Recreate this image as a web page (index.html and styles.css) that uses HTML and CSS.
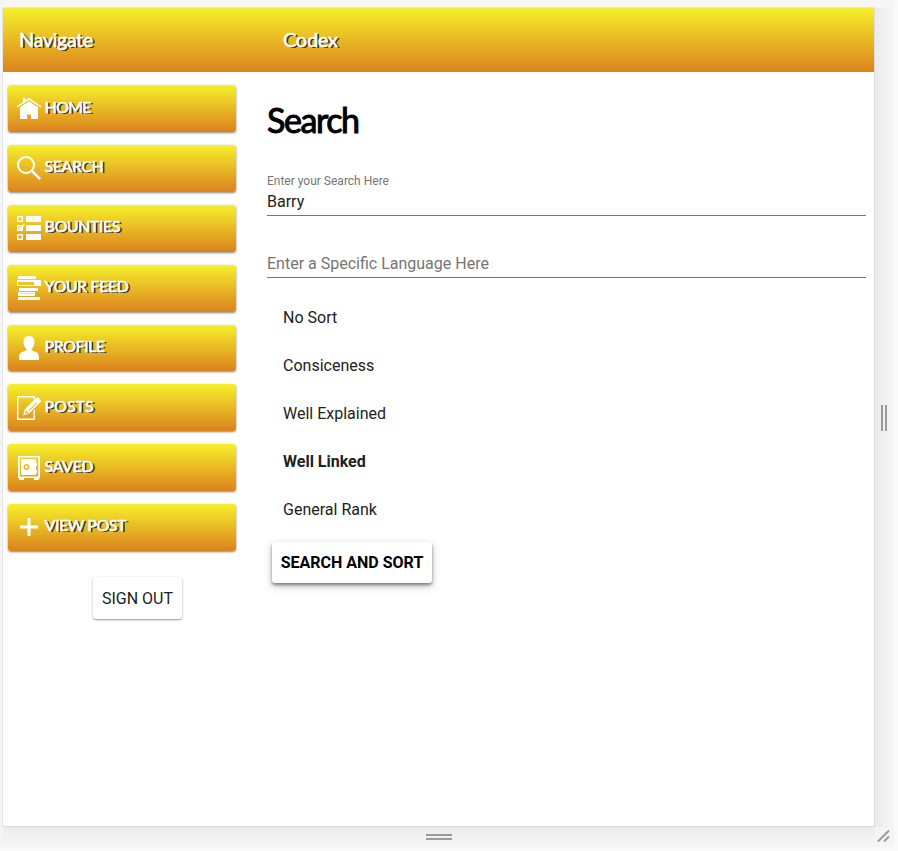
FILE: index.html
```
<!DOCTYPE html>
<html lang="en">
<head>
<meta charset="utf-8">
<title>Codex</title>
<link rel="stylesheet" href="styles.css">
</head>
<body>
<div class="stage">
  <div class="viewport">
    <header class="toolbar"><span class="brand">Navigate</span><span class="title">Codex</span></header>
    <div class="content">
      <nav class="sidebar">
        <a class="nav-button home"><svg viewBox="0 0 24 24"><path d="M0 9 6 5V1h2.500v2.400L12 1l12 8v1.500L12 3 0 10.500z"/><path d="M3 10.200 12 4.500l9 5.700V22h-7v-4.500h-4V22H3z"/></svg><span>HOME</span></a>
        <a class="nav-button search"><svg viewBox="0 0 24 24"><g class="line"><circle cx="9" cy="9" r="8"/><path d="m14.700 14.700 8.400 8.400" stroke-width="2.500"/></g></svg><span>SEARCH</span></a>
        <a class="nav-button bounties"><svg viewBox="0 0 24 24"><path d="M9 0h15v6H9zM9 9h15v6H9zM9 18h15v6H9z"/><path class="line thin" d="M.7.7h4.600v4.600H.7zM5.300 11v3.300H.7V9.700h4M2 11.500l1.500 1.300L7.300 8.500M.7 18.700h4.600v4.600H.7z"/></svg><span>BOUNTIES</span></a>
        <a class="nav-button feed"><svg viewBox="0 0 24 24"><path fill-rule="evenodd" d="M1 0h18v3H1zM0 4h24v6H0zM1 6v3h16V6zM2 12h19v3H2zM1 16h17v4H1zM2 17v.6h15V17zM1 21h22v3H1z"/></svg><span>YOUR FEED</span></a>
        <a class="nav-button profile"><svg viewBox="0 0 24 24"><path d="M12 0c4 0 6 3 5.300 7.200-.4 2.700-1.400 4.600-2.800 5.800v1.200l5 2c2 1 2.500 3.300 2.500 7.800H2c0-4.500.5-6.800 2.500-7.800l5-2V13C8.100 11.800 7.100 9.900 6.700 7.200 6 3 8 0 12 0z"/></svg><span>PROFILE</span></a>
        <a class="nav-button posts"><svg viewBox="0 0 24 24"><path class="line medium" d="M17.200 3V.7H.7v22.600h16.500V14"/><path fill-rule="evenodd" d="M6 19.500 8 13 18.500 2.500C20 1 21 1.500 22.500 3S24.500 5 23 6.500L12.500 17zM9 14.500 8 17.600l3.300-1.100zM11.600 14.300l.7.700 8-8-.7-.7z"/></svg><span>POSTS</span></a>
        <a class="nav-button saved"><svg viewBox="0 0 24 24"><path fill-rule="evenodd" d="M1 0h22v22h-1v2h-5v-2H7v2H2v-2H1zM2.800 1.600v18.800h18.400V1.600z"/><path fill-rule="evenodd" d="M4 3h15v4h1v3h-1v4h1v3h-1v2H4zM9.500 8a3 3 0 1 0 0 6 3 3 0 1 0 0-6zm0 1.500a1.500 1.500 0 1 1 0 3 1.500 1.500 0 1 1 0-3z"/></svg><span>SAVED</span></a>
        <a class="nav-button view"><svg viewBox="0 0 24 24"><path d="M10.500 3h3v7.500H21v3h-7.500V21h-3v-7.500H3v-3h7.500z"/></svg><span>VIEW POST</span></a>
        <button class="sign-out">SIGN OUT</button>
      </nav>
      <main class="main">
        <h1>Search</h1>
        <div class="field filled"><label>Enter your Search Here</label><div class="value">Barry</div></div>
        <div class="field empty"><label>Enter a Specific Language Here</label></div>
        <ul class="options">
          <li>No Sort</li><li>Consiceness</li><li>Well Explained</li><li class="selected">Well Linked</li><li>General Rank</li>
        </ul>
        <button class="submit">SEARCH AND SORT</button>
      </main>
    </div>
  </div>
  <div class="handle side"><i></i><i></i></div>
  <div class="handle bottom"><i></i><i></i></div>
  <div class="corner"><svg viewBox="0 0 14 14"><path d="M1 12.500 12 1.500M7 12.500l5-5"/></svg></div>
</div>
</body>
</html>
```
FILE: styles.css
```
* { box-sizing: border-box; }
body {
  margin: 0;
  height: 851px;
  overflow: hidden;
  background: #fafafa;
  font: 16px Roboto, sans-serif;
  color: #212121;
}
.stage {
  display: grid;
  grid-template: 819px 20px / 872px 19px;
  width: 894px;
  padding: 8px 0 0 3px;
  background: linear-gradient(#f6f6f6, #f4f4f4);
}
.viewport {
  background: #fff;
  border: solid #ddd;
  border-width: 0 1px 1px 0;
  box-shadow: 0 0 0 1px #e4e4e9;
  clip-path: inset(-1px 0 0 -1px);
}
.toolbar {
  display: flex;
  align-items: center;
  height: 64px;
  padding: 0 0 2px 16px;
  background: linear-gradient(#f6f02a, #db821e);
  color: #fff;
  font: 400 20px Lato, sans-serif;
  -webkit-text-stroke: .5px #fff;
  text-shadow: 2px 1px 0 #333;
}
.brand { width: 264px; letter-spacing: -.5px; }
.title { letter-spacing: -.3px; }
.content { display: flex; }
.sidebar {
  display: flex;
  flex-direction: column;
  gap: 13px;
  width: 264px;
  padding: 13px 0 0 5px;
}
.nav-button {
  display: flex;
  gap: 3.500px;
  width: 228px;
  height: 46.900px;
  padding: 11px 9px;
  border-radius: 3px;
  background: linear-gradient(#f6f02a, #db821e);
  box-shadow: 0 1px 2px rgba(0,0,0,.32), 0 1px 3px rgba(0,0,0,.2);
  color: #fff;
  font: 400 16px/22px Lato, sans-serif;
  -webkit-text-stroke: .5px #fff;
  text-shadow: 2px 1px 0 #333;
}
.nav-button svg { width: 24px; height: 24px; margin-top: .4px; fill: currentColor; }
.home svg { margin-top: 1px; }
.view svg { margin-top: -.6px; }
.nav-button span { margin-top: -.5px; letter-spacing: -.45px; white-space: nowrap; }
.home span { letter-spacing: -.8px; }
.posts span { letter-spacing: 0; }
.view span { margin-top: -1px; }
.nav-button .line { fill: none; stroke: currentColor; stroke-width: 2; }
.nav-button .thin, .nav-button .medium { stroke-width: 1.400; }
button {
  border: 0;
  border-radius: 3px;
  padding: 0;
  background: #fff;
  font: 16px Roboto, sans-serif;
}
.sign-out {
  width: 89px;
  height: 42px;
  margin: 13px 0 0 85px;
  padding-top: 1px;
  color: #212121;
  box-shadow: 0 1px 3px rgba(0,0,0,.25), 0 1px 1px rgba(0,0,0,.2);
}
.main { width: 599px; padding-top: 27px; }
h1 {
  margin: 0;
  color: #000;
  font: 400 34px/42px Lato, sans-serif;
  -webkit-text-stroke: 1px #000;
  letter-spacing: -1.400px;
}
.field { border-bottom: 1px solid #757575; color: #757575; }
.filled { height: 44px; margin-top: 31px; padding-top: 2px; }
.filled label { display: block; font-size: 12px; line-height: 15px; }
.value { padding-top: 3px; color: #212121; line-height: 19px; }
.empty { height: 62px; padding-top: 38px; line-height: 19px; }
.options { list-style: none; margin: 16px 0 0; padding: 0 16px; line-height: 48px; }
.selected { font-weight: 700; }
.submit {
  display: block;
  width: 160px;
  height: 41px;
  margin: 8px 0 0 5px;
  color: #000;
  font-weight: 700;
  box-shadow: 0 2px 3px rgba(0,0,0,.4), 0 3px 9px rgba(0,0,0,.25);
}
.handle { display: flex; align-items: center; justify-content: center; gap: 2px; }
.handle i { background: #9b9b9b; }
.side { padding-right: 1px; background: linear-gradient(90deg, #ebebeb, #f6f6f6); }
.side i { width: 2px; height: 26px; }
.bottom { flex-direction: column; background: linear-gradient(#ececec, #f5f5f5); }
.bottom i { width: 26px; height: 2px; }
.corner { padding: 2px 0 0 2px; }
.corner svg { display: block; width: 14px; height: 14px; fill: none; stroke: #9b9b9b; stroke-width: 2; }
```
